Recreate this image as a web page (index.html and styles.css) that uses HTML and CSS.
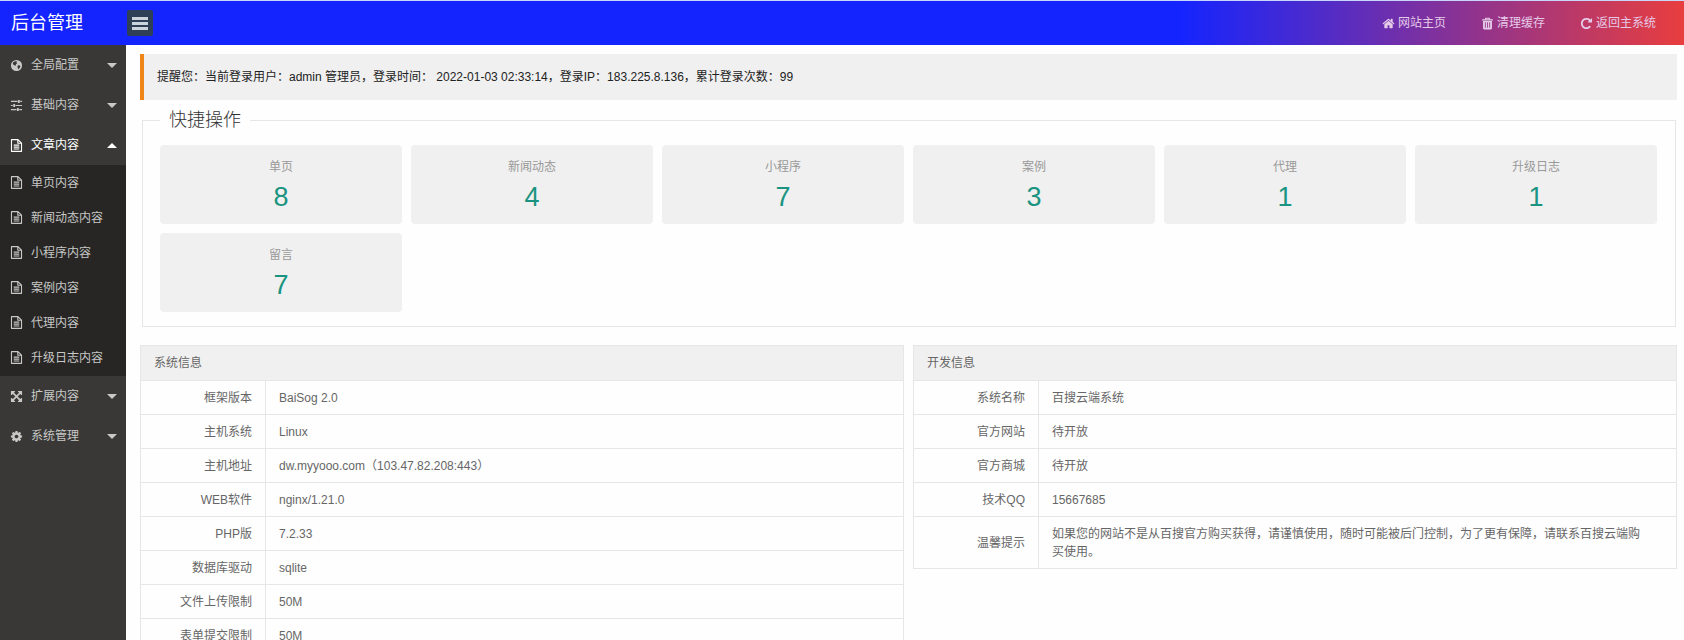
FILE: index.html
```html
<!DOCTYPE html>
<html lang="zh-CN">
<head>
  <meta charset="UTF-8">
  <title>后台管理</title>
  <link rel="stylesheet" href="styles.css">
</head>
<body>
  <!-- icons -->
  <svg class="sprite" aria-hidden="true">
    <symbol id="i-home" viewBox="0 0 1792 1792"><path d="M1472 992v480q0 26-19 45t-45 19h-384v-384h-256v384h-384q-26 0-45-19t-19-45v-480q0-1 .5-3t.5-3l575-474 575 474q1 2 1 6zm223-69l-62 74q-8 9-21 11h-3q-13 0-21-7l-692-577-692 577q-12 8-24 7-13-2-21-11l-62-74q-8-10-7-23.5t11-21.5l719-599q32-26 76-26t76 26l244 204v-195q0-14 9-23t23-9h192q14 0 23 9t9 23v408l219 182q10 8 11 21.5t-7 23.5z"/></symbol>
    <symbol id="i-trash" viewBox="0 0 14 14"><path fill-rule="evenodd" d="M4.600 .8h4.800l.6 1.700H12.800v1.200H1.200v-1.200H4zM5.400 2.500h3.200l-.3-.7H5.700zM2.200 4.200h9.600v8q0 1.200-1.200 1.200H3.400q-1.200 0-1.200-1.200zM4.200 5.600v6h.9v-6zM6.550 5.600v6h.9v-6zM8.900 5.600v6h.9v-6z"/></symbol>
    <symbol id="i-repeat" viewBox="0 0 1792 1792"><path d="M1664 256v448q0 26-19 45t-45 19h-448q-42 0-59-40-17-39 14-69l138-138q-148-137-349-137-104 0-198.500 40.500t-163.500 109.500-109.500 163.500-40.500 198.500 40.500 198.500 109.500 163.500 163.500 109.500 198.500 40.500q119 0 225-52t179-147q7-10 23-12 15 0 25 9l137 138q9 8 9.500 20.500t-7.500 22.500q-109 132-264 204.500t-327 72.500q-156 0-298-61t-245-164-164-245-61-298 61-298 164-245 245-164 298-61q147 0 284.500 55.500t244.500 156.500l130-129q29-31 70-14 39 17 39 59z"/></symbol>
    <symbol id="i-bars" viewBox="0 0 16 14"><path d="M0 1h16v3H0zM0 6h16v3H0zM0 11h16v3H0z"/></symbol>
    <symbol id="i-globe" viewBox="0 0 14 14"><path fill-rule="evenodd" d="M7 1a6 6 0 1 1 0 12A6 6 0 0 1 7 1zM3.400 3.600L3 5.400 4.400 6.800 6 7.200 6.400 5.600 7.800 4.600 6.800 3.400 7.400 2.200 5 2.600zM8.600 6.800L8 8.600l1 2.400 1.400-1.400.8-2-1.200-1z"/></symbol>
    <symbol id="i-sliders" viewBox="0 0 14 14"><path d="M1 2h7v1.200H1zM11 2h2v1.200h-2zM8.500 1h2v3.200h-2zM1 6.400h2v1.200H1zM6 6.400h7v1.200H6zM3.500 5.400h2v3.200h-2zM1 10.800h6v1.200H1zM10 10.800h3v1.200h-3zM7.500 9.800h2V13h-2z"/></symbol>
    <symbol id="i-file" viewBox="0 0 14 14"><path fill="none" stroke="currentColor" stroke-width="1.200" stroke-linejoin="round" d="M1.600 .7H8.600L12.400 4.400V13.300H1.600zM8.400 .8V4.600H12.300M4 6.600H10M4 8.700H10M4 10.800H10"/></symbol>
    <symbol id="i-arrows" viewBox="0 0 1792 1792"><path d="M1411 541l-355 355 355 355 144-144q29-31 70-14 39 17 39 59v448q0 26-19 45t-45 19h-448q-42 0-59-40-17-39 14-69l144-144-355-355-355 355 144 144q31 30 14 69-17 40-59 40h-448q-26 0-45-19t-19-45v-448q0-42 40-59 39-17 69 14l144 144 355-355-355-355-144 144q-19 19-45 19-12 0-24-5-40-17-40-59v-448q0-26 19-45t45-19h448q42 0 59 40 17 39-14 69l-144 144 355 355 355-355-144-144q-31-30-14-69 17-40 59-40h448q26 0 45 19t19 45v448q0 42-39 59-13 5-25 5-26 0-45-19z"/></symbol>
    <symbol id="i-cog" viewBox="0 0 1792 1792"><path d="M1152 896q0-106-75-181t-181-75-181 75-75 181 75 181 181 75 181-75 75-181zm512-109v222q0 12-8 23t-20 13l-185 28q-19 54-39 91 35 50 107 138 10 12 10 25t-9 23q-27 37-99 108t-94 71q-12 0-26-9l-138-108q-44 23-91 38-16 136-29 186-7 28-36 28h-222q-14 0-24.500-8.500t-11.500-21.500l-28-184q-49-16-90-37l-141 107q-10 9-25 9-14 0-25-11-126-114-165-168-7-10-7-23 0-12 8-23 15-21 51-66.500t54-70.500q-27-50-41-99l-183-27q-13-2-21-12.500t-8-23.500v-222q0-12 8-23t19-13l186-28q14-46 39-92-40-57-107-138-10-12-10-24 0-10 9-23 26-36 98.500-107.500t94.500-71.500q13 0 26 10l138 107q44-23 91-38 16-136 29-186 7-28 36-28h222q14 0 24.500 8.500t11.500 21.500l28 184q49 16 90 37l142-107q9-9 24-9 13 0 25 10 129 119 165 170 7 8 7 22 0 12-8 23-15 21-51 66.500t-54 70.500q26 50 41 98l183 28q13 2 21 12.500t8 23.500z"/></symbol>
  </svg>

  <header class="header">
    <h1 class="logo">后台管理</h1>
    <button class="toggle" type="button" aria-label="菜单"><svg><use href="#i-bars"/></svg></button>
    <nav class="top-nav">
      <a href="#"><svg class="icon"><use href="#i-home"/></svg>网站主页</a>
      <a href="#"><svg class="icon"><use href="#i-trash"/></svg>清理缓存</a>
      <a href="#"><svg class="icon"><use href="#i-repeat"/></svg>返回主系统</a>
    </nav>
  </header>

  <div class="layout">
    <nav class="side">
      <a class="item" href="#"><svg class="icon"><use href="#i-globe"/></svg>全局配置<i class="caret"></i></a>
      <a class="item" href="#"><svg class="icon"><use href="#i-sliders"/></svg>基础内容<i class="caret"></i></a>
      <a class="item open" href="#"><svg class="icon"><use href="#i-file"/></svg>文章内容<i class="caret"></i></a>
      <div class="sub">
        <a href="#"><svg class="icon"><use href="#i-file"/></svg>单页内容</a>
        <a href="#"><svg class="icon"><use href="#i-file"/></svg>新闻动态内容</a>
        <a href="#"><svg class="icon"><use href="#i-file"/></svg>小程序内容</a>
        <a href="#"><svg class="icon"><use href="#i-file"/></svg>案例内容</a>
        <a href="#"><svg class="icon"><use href="#i-file"/></svg>代理内容</a>
        <a href="#"><svg class="icon"><use href="#i-file"/></svg>升级日志内容</a>
      </div>
      <a class="item" href="#"><svg class="icon"><use href="#i-arrows"/></svg>扩展内容<i class="caret"></i></a>
      <a class="item" href="#"><svg class="icon"><use href="#i-cog"/></svg>系统管理<i class="caret"></i></a>
    </nav>

    <main class="main">
      <p class="notice">提醒您：当前登录用户：admin 管理员，登录时间： 2022-01-03 02:33:14，登录IP：183.225.8.136，累计登录次数：99</p>

      <fieldset class="quick">
        <legend>快捷操作</legend>
        <div class="cards">
          <a class="card" href="#"><h3>单页</h3><b>8</b></a>
          <a class="card" href="#"><h3>新闻动态</h3><b>4</b></a>
          <a class="card" href="#"><h3>小程序</h3><b>7</b></a>
          <a class="card" href="#"><h3>案例</h3><b>3</b></a>
          <a class="card" href="#"><h3>代理</h3><b>1</b></a>
          <a class="card" href="#"><h3>升级日志</h3><b>1</b></a>
          <a class="card" href="#"><h3>留言</h3><b>7</b></a>
        </div>
      </fieldset>

      <div class="tables">
        <table class="info">
          <colgroup><col class="name"><col></colgroup>
          <thead><tr><th colspan="2">系统信息</th></tr></thead>
          <tbody>
            <tr><th>框架版本</th><td>BaiSog 2.0</td></tr>
            <tr><th>主机系统</th><td>Linux</td></tr>
            <tr><th>主机地址</th><td>dw.myyooo.com（103.47.82.208:443）</td></tr>
            <tr><th>WEB软件</th><td>nginx/1.21.0</td></tr>
            <tr><th>PHP版</th><td>7.2.33</td></tr>
            <tr><th>数据库驱动</th><td>sqlite</td></tr>
            <tr><th>文件上传限制</th><td>50M</td></tr>
            <tr><th>表单提交限制</th><td>50M</td></tr>
          </tbody>
        </table>
        <table class="info">
          <colgroup><col class="name"><col></colgroup>
          <thead><tr><th colspan="2">开发信息</th></tr></thead>
          <tbody>
            <tr><th>系统名称</th><td>百搜云端系统</td></tr>
            <tr><th>官方网站</th><td>待开放</td></tr>
            <tr><th>官方商城</th><td>待开放</td></tr>
            <tr><th>技术QQ</th><td>15667685</td></tr>
            <tr><th>温馨提示</th><td>如果您的网站不是从百搜官方购买获得，请谨慎使用，随时可能被后门控制，为了更有保障，请联系百搜云端购买使用。</td></tr>
          </tbody>
        </table>
      </div>
    </main>
  </div>
</body>
</html>
```
FILE: styles.css
```css
* { box-sizing:border-box; }
body { margin:0; height:100vh; display:flex; flex-direction:column; overflow:hidden; background:#fefefe; color:#666; font:12px/18px "Liberation Sans","Noto Sans CJK SC",sans-serif; }
a { color:inherit; text-decoration:none; }
h1, h3, p { margin:0; font-weight:normal; }
.sprite { display:none; }
.icon { width:13px; height:13px; fill:currentColor; flex:none; }

/* header */
.header { display:flex; align-items:center; flex:none; height:45px; border-top:1px solid #c8d6fb; background:linear-gradient(90deg,#1424ff 70%,#e83e3e) border-box; color:#fff; }
.logo { width:127px; padding-left:11px; font-size:18px; line-height:44px; }
.toggle { display:flex; align-items:center; justify-content:center; width:26px; height:26px; padding:0; border:0; border-radius:2px; background:#2f4056; color:#ccd3dc; }
.toggle svg { width:16px; height:14px; fill:currentColor; }
.top-nav { display:flex; gap:35px; margin-left:auto; padding-right:28px; color:#e6cbe9; }
.top-nav a { display:flex; align-items:center; gap:3px; }

/* sidebar */
.layout { display:flex; flex:1; min-height:0; }
.side { width:126px; flex:none; background:#393836; color:#c8c8c7; }
.side a { display:flex; align-items:center; gap:8px; height:35px; padding:0 9px 0 10px; }
.side .item { height:40px; }
.side .open { color:#fff; }
.sub { padding-bottom:1px; background:#272624; }
.caret { margin-left:auto; border:5px solid transparent; border-top-color:currentColor; border-bottom:0; }
.open .caret { border-top:0; border-bottom:5px solid; }

/* content */
.main { flex:1; min-width:0; padding:9px 7px 0 14px; }
.notice { padding:14px 14px 14px 13px; border-left:4px solid #f08519; background:#f0f0f0; color:#222; }
.quick { margin:10px 1px 18px 2px; padding:15px 18px 14px 17px; border:1px solid #e6e6e6; }
.quick legend { padding:0 9px; color:#333; font-size:18px; line-height:20px; font-weight:300; }
.cards { display:grid; grid-template-columns:repeat(6,1fr); gap:9px; }
.card { height:79px; padding:13px 0; border-radius:4px; background:#f0f0f0; text-align:center; }
.card h3 { color:#999; font-size:12px; }
.card b { display:block; color:#1a9480; font-size:27px; line-height:42px; font-weight:normal; }

.tables { display:grid; grid-template-columns:1fr 1fr; gap:9px; align-items:start; }
.info { width:100%; table-layout:fixed; border-collapse:collapse; }
.info .name { width:125px; }
.info th, .info td { padding:8px 28px 7px 13px; border:1px solid #e6e6e6; text-align:left; font-weight:normal; }
.info thead th { padding:8px 13px; background:#f0f0f0; }
.info tbody th { padding-right:13px; text-align:right; }
```
